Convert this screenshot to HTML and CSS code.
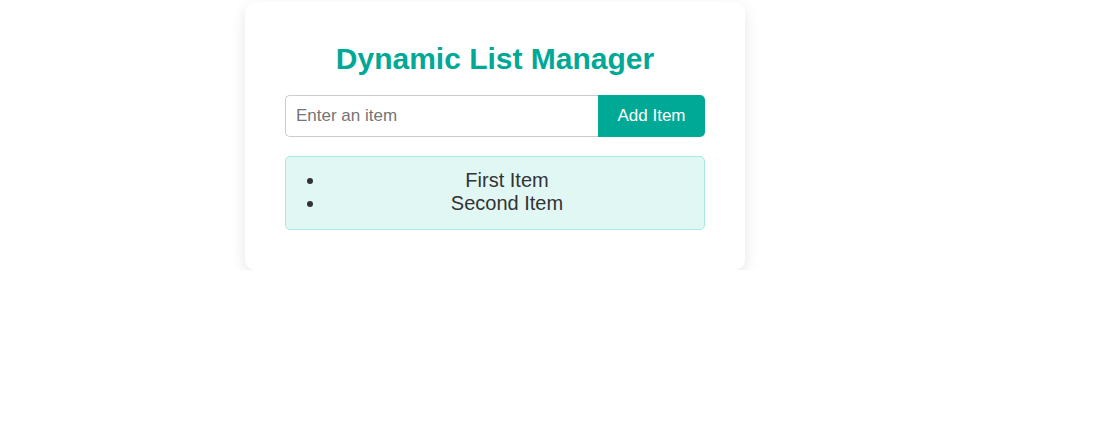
FILE: index.html
```html
<!DOCTYPE html>
<html>
<head>
<meta charset="utf-8">
<link rel="stylesheet" href="styles.css">
</head>
<body>
<div class="card">
  <h1 class="title">Dynamic List Manager</h1>
  <div class="form">
    <input class="field" type="text" placeholder="Enter an item">
    <button class="add">Add Item</button>
  </div>
  <ul class="list">
    <li>First Item</li>
    <li>Second Item</li>
  </ul>
</div>
</body>
</html>
```

FILE: styles.css
```css
html, body {
  margin: 0;
  background: #fff;
}
body {
  padding: 2px 0 0 245px;
  font-family: "Liberation Sans", Arial, sans-serif;
}
.card {
  width: 500px;
  box-sizing: border-box;
  padding: 40px;
  background: #fff;
  border-radius: 10px;
  box-shadow: 0 5px 15px rgba(0, 0, 0, 0.1);
}
.title {
  margin: 0 0 19px;
  text-align: center;
  color: #00a896;
  font-size: 30px;
  font-weight: bold;
  line-height: 34px;
}
.form {
  display: flex;
  height: 42px;
}
.field {
  flex: 1;
  min-width: 0;
  box-sizing: border-box;
  height: 42px;
  padding: 0 10px;
  border: 1px solid #ccc;
  border-right: none;
  border-radius: 5px 0 0 5px;
  font-family: inherit;
  font-size: 17px;
  color: #333;
  outline: none;
}
.field::placeholder {
  color: #757575;
}
.add {
  width: 107px;
  height: 42px;
  border: none;
  border-radius: 0 5px 5px 0;
  background: #00a896;
  color: #fff;
  font-family: inherit;
  font-size: 17px;
  cursor: pointer;
}
.list {
  margin: 19px 0 0;
  padding: 12px 16px 14px 40px;
  background: #e0f7f4;
  border: 1px solid #a8e8e2;
  border-radius: 5px;
  color: #333;
  font-size: 20px;
  line-height: 23px;
}
.list li {
  text-align: center;
}
```
